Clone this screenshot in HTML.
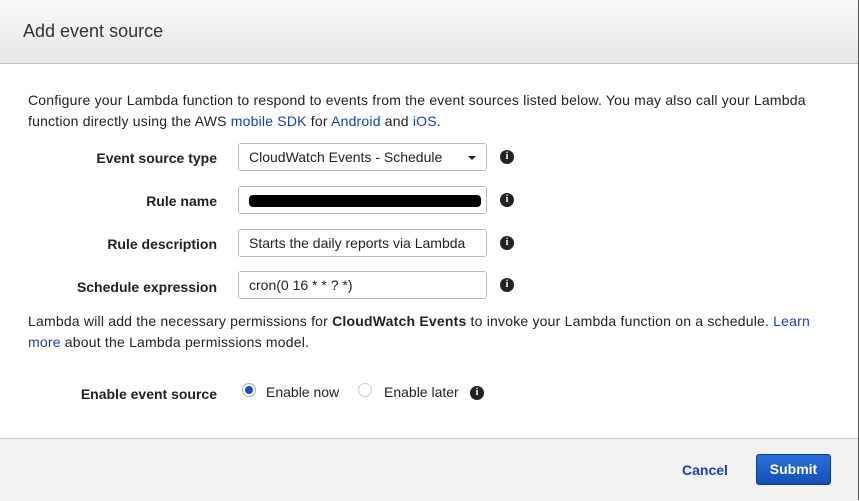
<!DOCTYPE html>
<html><head><style>
body{margin:0;width:859px;height:500px;overflow:hidden;font-family:"Liberation Sans",Arial,sans-serif;font-size:14px;color:#222;background:#fff;position:relative}
.hdr{position:absolute;left:0;top:0;width:858px;height:63px;background:linear-gradient(#fafafa,#e6e6e6);border-bottom:1px solid #c4c4c4}
.hdr span{position:absolute;left:23px;top:21px;font-size:18px;color:#333}
.rb{position:absolute;right:0;top:0;width:1px;height:500px;background:#555}
.p{position:absolute;left:28px;line-height:21px;width:800px;letter-spacing:0.2px}
a{color:#1a3fb0;text-decoration:none}
.lab{position:absolute;width:217px;text-align:right;font-weight:bold;left:0}
.inp{position:absolute;left:238px;width:249px;height:28px;border:1px solid #bbb;border-radius:3px;box-sizing:border-box;padding:0 10px;line-height:26px;background:#fff}
.i{position:absolute;left:500px;width:14px;height:14px;border-radius:50%;background:#222;color:#fff;font:bold 10px/14px "Liberation Serif",serif;text-align:center}
.ft{position:absolute;left:0;top:438px;width:858px;height:62px;background:#f2f2f2;border-top:1px solid #c8c8c8}
</style></head><body>
<div class="hdr"><span>Add event source</span></div>
<div class="p" style="top:90px">Configure your Lambda function to respond to events from the event sources listed below. You may also call your Lambda function directly using the AWS <a>mobile SDK</a> for <a>Android</a> and <a>iOS</a>.</div>
<div class="lab" style="top:150px">Event source type</div>
<div class="inp" style="top:143px">CloudWatch Events - Schedule<span style="position:absolute;right:10px;top:12px;border:4px solid transparent;border-top:4px solid #222;border-bottom:0"></span></div>
<div class="i" style="top:150px">i</div>
<div class="lab" style="top:193px">Rule name</div>
<div class="inp" style="top:186px"><div style="position:absolute;left:10px;top:8px;width:232px;height:12px;background:#000;border-radius:4px"></div></div>
<div class="i" style="top:193px">i</div>
<div class="lab" style="top:236px">Rule description</div>
<div class="inp" style="top:229px">Starts the daily reports via Lambda</div>
<div class="i" style="top:236px">i</div>
<div class="lab" style="top:279px">Schedule expression</div>
<div class="inp" style="top:271px">cron(0 16 * * ? *)</div>
<div class="i" style="top:278px">i</div>
<div class="p" style="top:311px;width:830px;white-space:nowrap">Lambda will add the necessary permissions for <b>CloudWatch Events</b> to invoke your Lambda function on a schedule. <a>Learn</a><br><a>more</a> about the Lambda permissions model.</div>
<div class="lab" style="top:386px">Enable event source</div>
<div style="position:absolute;left:242px;top:383px;width:14px;height:14px;border-radius:50%;border:1px solid #aaa;box-sizing:border-box;background:#fff"><div style="margin:2px;width:8px;height:8px;border-radius:50%;background:#1550c0"></div></div>
<div style="position:absolute;left:266px;top:384px">Enable now</div>
<div style="position:absolute;left:358px;top:383px;width:14px;height:14px;border-radius:50%;border:1px solid #ccc;box-sizing:border-box"></div>
<div style="position:absolute;left:384px;top:384px">Enable later</div>
<div class="i" style="left:470px;top:386px">i</div>
<div class="ft"></div>
<div style="position:absolute;left:682px;top:462px;font-weight:bold;color:#1a3fb0">Cancel</div>
<div style="position:absolute;left:756px;top:454px;width:75px;height:31px;border-radius:3px;background:linear-gradient(#2a6fd6,#1450b8);border:1px solid #0d3d90;box-sizing:border-box;color:#fff;font-weight:bold;text-align:center;line-height:29px">Submit</div>
<div class="rb"></div>
</body></html>
